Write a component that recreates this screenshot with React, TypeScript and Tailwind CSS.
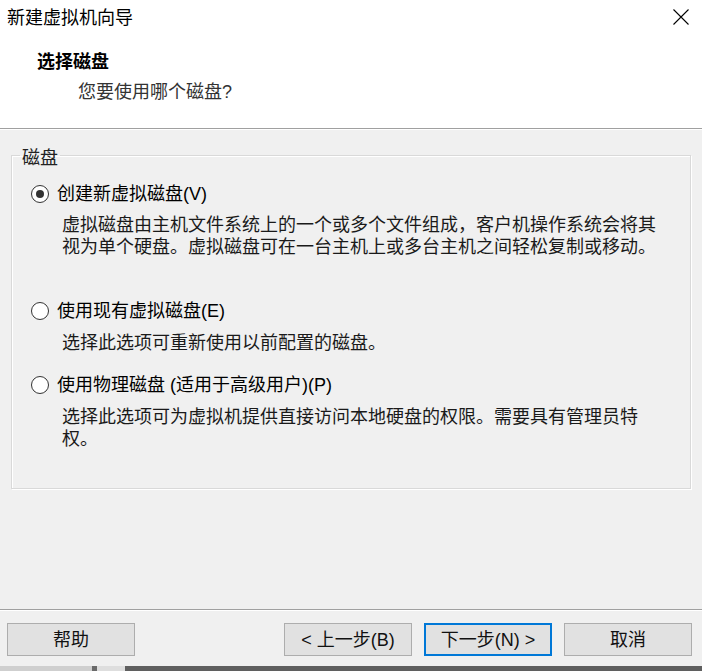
import React, { useState } from 'react';

const FONT = '"Liberation Sans", "Noto Sans CJK SC", sans-serif';

interface OptionProps {
  label: string;
  checked: boolean;
  onSelect: () => void;
}

const RadioRow: React.FC<OptionProps> = ({ label, checked, onSelect }) => (
  <div className="flex h-[22px] items-center pl-[19px] cursor-default" onClick={onSelect}>
    <span className="flex h-[18px] w-[18px] items-center justify-center rounded-full border border-[#333333] bg-white">
      {checked && <span className="h-[8px] w-[8px] rounded-full bg-[#333333]" />}
    </span>
    <span className="ml-[8px] text-black">{label}</span>
  </div>
);

const WinButton: React.FC<{ label: string; primary?: boolean }> = ({ label, primary }) => (
  <button
    type="button"
    className={`flex h-[33px] w-[128px] items-center justify-center bg-[#e1e1e1] text-[#111111] ${
      primary ? 'border-2 border-[#0078d7]' : 'border border-[#adadad]'
    }`}
  >
    {label}
  </button>
);

export default function App() {
  const [choice, setChoice] = useState(0);

  return (
    <div
      className="flex h-[671px] w-[702px] flex-col overflow-hidden bg-[#f0f0f0] text-[18px] leading-[22px]"
      style={{ fontFamily: FONT }}
    >
      {/* Header */}
      <div className="h-[129px] shrink-0 border-b border-[#a0a0a0] bg-white">
        <div className="flex items-start justify-between pl-[7px] pr-[13px] pt-[7px]">
          <span className="text-black">新建虚拟机向导</span>
          <svg className="mt-[2px] h-[16px] w-[16px]" viewBox="0 0 16 16">
            <path d="M0.5 0.5 L15.5 15.5 M15.5 0.5 L0.5 15.5" stroke="#000" strokeWidth="1.1" fill="none" />
          </svg>
        </div>
        <div className="mt-[22px] pl-[37px] font-bold text-black">选择磁盘</div>
        <div className="mt-[8px] pl-[78px] text-[#333333]">您要使用哪个磁盘?</div>
      </div>

      {/* Body */}
      <div className="flex-1 border-t border-white px-[11px] pt-[14px]">
        <fieldset className="border border-[#d9d9d9] pb-[38px] shadow-[inset_1px_1px_0_#ffffff,1px_1px_0_#ffffff]">
          <legend className="ml-[8px] px-[2px] pt-[6px] leading-[16px] text-[#222222]">磁盘</legend>

          <div className="mt-[17px]">
            <RadioRow label="创建新虚拟磁盘(V)" checked={choice === 0} onSelect={() => setChoice(0)} />
          </div>
          <div className="mt-[9px] whitespace-nowrap pl-[50px] text-[#1a1a1a]">
            虚拟磁盘由主机文件系统上的一个或多个文件组成，客户机操作系统会将其
            <br />
            视为单个硬盘。虚拟磁盘可在一台主机上或多台主机之间轻松复制或移动。
          </div>

          <div className="mt-[42px]">
            <RadioRow label="使用现有虚拟磁盘(E)" checked={choice === 1} onSelect={() => setChoice(1)} />
          </div>
          <div className="mt-[10px] pl-[50px] text-[#1a1a1a]">选择此选项可重新使用以前配置的磁盘。</div>

          <div className="mt-[20px]">
            <RadioRow label="使用物理磁盘 (适用于高级用户)(P)" checked={choice === 2} onSelect={() => setChoice(2)} />
          </div>
          <div className="mt-[10px] whitespace-nowrap pl-[50px] text-[#1a1a1a]">
            选择此选项可为虚拟机提供直接访问本地硬盘的权限。需要具有管理员特
            <br />
            权。
          </div>
        </fieldset>
      </div>

      {/* Footer */}
      <div className="shrink-0 border-t border-[#a0a0a0]">
        <div className="flex items-center justify-between border-t border-white pb-[10px] pl-[7px] pr-[10px] pt-[12px]">
          <WinButton label="帮助" />
          <div className="flex gap-[12px]">
            <WinButton label="< 上一步(B)" />
            <WinButton label="下一步(N) >" primary />
            <WinButton label="取消" />
          </div>
        </div>
      </div>

      {/* Strip of the window below */}
      <div className="flex h-[5px] shrink-0">
        <div className="w-[92px] bg-[#cfcfcf]" />
        <div className="w-[5px] bg-[#6a6a6a]" />
        <div className="w-[28px] bg-[#dedede]" />
        <div className="flex-1 bg-[#5f5f5f]" />
      </div>
    </div>
  );
}
